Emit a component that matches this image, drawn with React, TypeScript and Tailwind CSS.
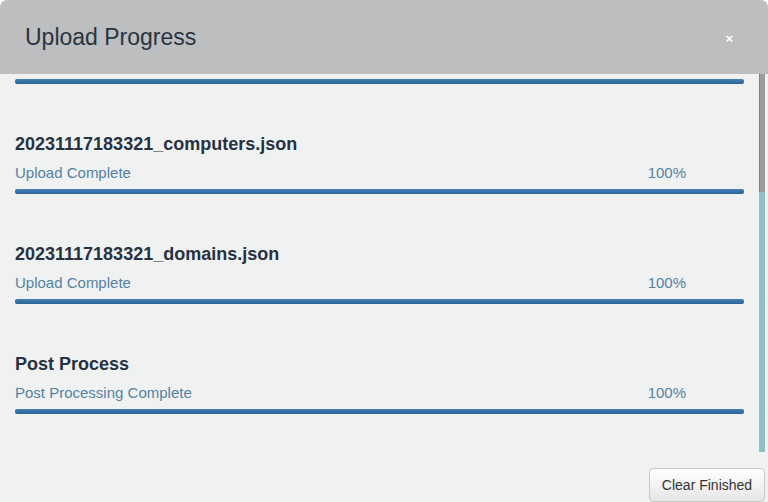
import React from 'react';

type Item = { name: string; status: string; percent: number };

const items: Item[] = [
  { name: '20231117183321_computers.json', status: 'Upload Complete', percent: 100 },
  { name: '20231117183321_domains.json', status: 'Upload Complete', percent: 100 },
  { name: 'Post Process', status: 'Post Processing Complete', percent: 100 },
];

const Bar = ({ percent }: { percent: number }) => (
  <div className="h-[5px] w-full rounded-[2px] bg-[#d9dcdf]">
    <div
      className="h-full rounded-[2px] bg-gradient-to-b from-[#4281b8] to-[#2c6394]"
      style={{ width: `${percent}%` }}
    ></div>
  </div>
);

const App = () => {
  return (
    <div className="h-[502px] w-[768px] bg-white font-['Liberation_Sans',Arial,sans-serif]">
      <div className="flex h-full w-full flex-col overflow-hidden rounded-t-[7px] bg-[#f0f1f1]">
        {/* header */}
        <div className="flex h-[74px] shrink-0 items-center justify-between bg-[#bdbebf] pl-[25px] pr-[35px]">
          <div className="text-[23px] leading-[28px] text-[#283341]">Upload Progress</div>
          <div className="pt-[2px] text-[13px] font-bold leading-none text-white">×</div>
        </div>

        {/* scroll area */}
        <div className="flex h-[378px] shrink-0">
          <div className="flex-1 pl-[15px] pr-[15px] pt-[5px]">
            <Bar percent={100} />
            {items.map((item) => (
              <div key={item.name} className="mt-[48px]">
                <div className="text-[18px] font-bold leading-[24px] text-[#263141]">{item.name}</div>
                <div className="mt-[7px] flex justify-between pr-[58px] text-[15px] leading-[20px] text-[#5581a3]">
                  <span>{item.status}</span>
                  <span>{item.percent}%</span>
                </div>
                <div className="mt-[6px]">
                  <Bar percent={item.percent} />
                </div>
              </div>
            ))}
          </div>
          <div className="flex w-[6px] flex-col">
            <div className="h-[118px] border-l border-[#7f8081] bg-[#9b9c9d]"></div>
            <div className="flex-1 bg-[#8fc1c4]"></div>
          </div>
          <div className="w-[3px]"></div>
        </div>

        {/* footer */}
        <div className="flex flex-1 items-end justify-end pr-[3px]">
          <button className="h-[34px] w-[116px] rounded-[4px] border border-[#c8c8c8] bg-gradient-to-b from-white to-[#e6e6e6] text-[14px] leading-[20px] text-[#333333]">
            Clear Finished
          </button>
        </div>
      </div>
    </div>
  );
};

export default App;
